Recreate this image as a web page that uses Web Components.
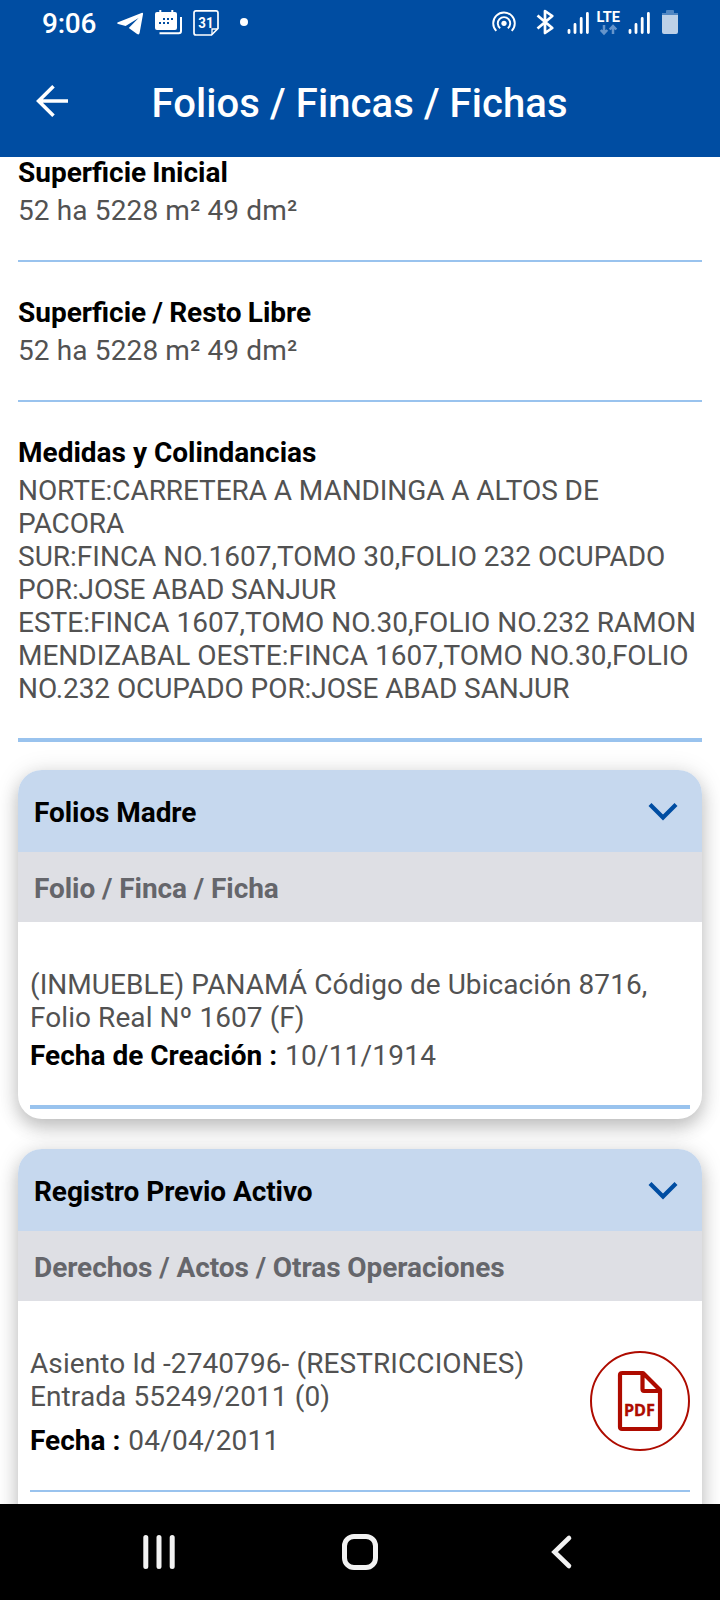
<!DOCTYPE html>
<html lang="es">
<head>
<meta charset="utf-8">
<title>Folios / Fincas / Fichas</title>
<style>
html,body{margin:0;height:100%;overflow:hidden}
body{background:#fff;font-family:Roboto,"Liberation Sans",sans-serif}
</style>
</head>
<body>
<phone-screen>
  <status-bar slot="top"></status-bar>
  <title-bar slot="top">Folios / Fincas / Fichas</title-bar>
  <data-field label="Superficie Inicial" style="--label-words:-1px"><text-line track=".13">52 ha 5228 m² 49 dm²</text-line></data-field>
  <data-field label="Superficie / Resto Libre" style="--label-words:-.7px"><text-line track=".13">52 ha 5228 m² 49 dm²</text-line></data-field>
  <data-field label="Medidas y Colindancias" class="last"><text-line track="-.08">NORTE:CARRETERA A MANDINGA A ALTOS DE</text-line><text-line track="-.15">PACORA</text-line><text-line>SUR:FINCA NO.1607,TOMO 30,FOLIO 232 OCUPADO</text-line><text-line track="-.1">POR:JOSE ABAD SANJUR</text-line><text-line track=".01">ESTE:FINCA 1607,TOMO NO.30,FOLIO NO.232 RAMON</text-line><text-line>MENDIZABAL OESTE:FINCA 1607,TOMO NO.30,FOLIO</text-line><text-line track="-.07">NO.232 OCUPADO POR:JOSE ABAD SANJUR</text-line></data-field>
  <folio-card heading="Folios Madre" sub="Folio / Finca / Ficha">
    <folio-entry label="Fecha de Creación :" date="10/11/1914" class="last"><text-line track=".05">(INMUEBLE) PANAMÁ Código de Ubicación 8716,</text-line><text-line track=".07">Folio Real Nº 1607 (F)</text-line></folio-entry>
  </folio-card>
  <folio-card heading="Registro Previo Activo" sub="Derechos / Actos / Otras Operaciones" class="more">
    <folio-entry label="Fecha :" date="04/04/2011" class="doc"><text-line track=".09">Asiento Id -2740796- (RESTRICCIONES)</text-line><text-line track=".1">Entrada 55249/2011 (0)</text-line><pdf-button slot="action"></pdf-button></folio-entry>
  </folio-card>
  <nav-bar slot="bottom"></nav-bar>
</phone-screen>
<script>
const define = (name, html, setup) => customElements.define(name, class extends HTMLElement {
  constructor() {
    super();
    this.attachShadow({ mode: 'open' }).innerHTML = html;
  }
  connectedCallback() {
    if (setup) setup(this, this.shadowRoot);
  }
});

define('phone-screen', `
<style>
:host{display:flex;flex-direction:column;width:720px;height:1600px;overflow:hidden;background:#fff}
header{flex:none;height:157px;background:#004da2;color:#fff;position:relative;z-index:1}
main{flex:1;min-height:0;overflow:hidden;display:flex;flex-direction:column}
.scroll{padding:0 18px;margin-top:-1px}
</style>
<header><slot name="top"></slot></header>
<main><div class="scroll"><slot></slot></div></main>
<slot name="bottom"></slot>`);

define('text-line', `
<style>:host{display:block;white-space:nowrap}</style><slot></slot>`, el => {
  if (el.hasAttribute('track')) el.style.letterSpacing = el.getAttribute('track') + 'px';
});

define('status-bar', `
<style>
:host{display:flex;height:46px;justify-content:space-between;padding:0 42px;box-sizing:border-box}
div{display:flex;align-items:flex-start}
.time{font-size:28px;font-weight:500;line-height:33px;padding-top:7px;width:75px;white-space:nowrap;letter-spacing:-.25px}
svg{display:block;height:46px;flex:none}
.left{gap:11px}
text{font-family:Roboto,sans-serif;font-weight:700;fill:#fff}
</style>
<div class="left">
  <div class="time" style="margin-right:-11px">9:06</div>
  <svg width="27" viewBox="117 0 27 46"><path fill="#fff" d="M118 22.2 141.5 12.9Q143.4 12.4 143 14.3L139.6 33Q139 35.3 137.1 34L128.8 28 138.6 18 125.6 26 118.2 24Q116 23.1 118 22.2Z"/></svg>
  <svg width="27" viewBox="155 0 27 46"><path fill="#fff" d="M157 12h2.3v-2h2v2h10v-2h2v2h1.700q2 0 2 2v14q0 2-2 2h-18q-2 0-2-2V14q0-2 2-2Z"/><path d="M181 17v14q0 2.300-2.300 2.300H159.500" fill="none" stroke="#fff" stroke-width="2"/><path fill="#004da2" d="M163 18h2v2h-2zM167 18h2v2h-2zM171 18h2v2h-2zM159 22h2v2h-2zM163 22h2v2h-2zM167 22h2v2h-2z"/></svg>
  <svg width="27" viewBox="193 0 27 46"><path fill="none" stroke="#fff" stroke-width="1.700" d="M196 10.900H216Q218 10.900 218 13V28.500L211.500 35H196Q194 35 194 33V13Q194 10.900 196 10.900Z"/><path d="M212 34.500V29H217.500" fill="none" stroke="#fff" stroke-width="1.300"/><text x="198.300" y="28" font-size="15.500" textLength="15.200" lengthAdjust="spacingAndGlyphs">31</text></svg>
  <svg width="10" viewBox="239 0 10 46" style="margin-left:8px"><circle cx="244" cy="22" r="4" fill="#fff"/></svg>
</div>
<div>
  <svg width="187" viewBox="491 0 187 46" fill="none" stroke="#fff">
    <circle cx="504" cy="23.300" r="2.600" fill="#fff" stroke="none"/>
    <path stroke-width="1.900" d="M500.200 28.200A6.200 6.200 0 1 1 507.800 28.200M496.300 30.900A10.800 10.800 0 1 1 511.700 30.900"/>
    <path stroke-width="2.700" stroke-linejoin="round" d="M537.500 15.500 552.300 28 545 33V11L552.300 16 537.500 28.500"/>
    <g stroke-width="2.800" stroke-linecap="round"><path d="M569 30.400V32.600M575 24.400V32.600M581.200 18.400V32.600M587.400 13.400V32.600"/><path d="M630 30.400V32.600M636 24.400V32.600M642.200 18.400V32.600M648.400 13.400V32.600"/></g>
    <text x="596.500" y="21.700" font-size="15" textLength="23.500" lengthAdjust="spacingAndGlyphs" stroke="none">LTE</text>
    <path stroke="#6695cb" stroke-width="2.500" d="M604 25V33M600.700 30 604 33.400 607.300 30M613 34V26M609.700 29.500 613 26 616.300 29.500"/>
    <path fill="#4f86c3" stroke="none" d="M666 13V11Q666 10 667 10h6q1 0 1 1v2h4v2h-16v-2z"/><path fill="#bcd0e8" stroke="none" d="M662 15h16v17q0 2-2 2h-12q-2 0-2-2z"/>
  </svg>
</div>`);

define('title-bar', `
<style>
:host{display:flex;height:111px;align-items:center;box-sizing:border-box;padding-left:35px}
svg{display:block;flex:none;margin-right:82.500px}
h1{margin:0;padding-top:4px;font-size:40px;font-weight:500;line-height:48px;white-space:nowrap;letter-spacing:.09px}
</style>
<svg width="34" height="34" viewBox="0 0 34 34" fill="none" stroke="#fff" stroke-width="3.600"><path d="M18.500 1.300 3.600 16 18.500 30.700M4 16H33"/></svg>
<h1><slot></slot></h1>`);

define('data-field', `
<style>
:host{display:block;font-size:28px;line-height:33px;color:#525252;border-bottom:2px solid #99c3ee;padding-bottom:33px;margin-bottom:34px;white-space:nowrap}
:host(.last){border-bottom-width:4px;margin-bottom:28px}
strong{display:block;color:#000;font-weight:700;margin-bottom:5px;word-spacing:var(--label-words,0)}
</style>
<strong></strong><div><slot></slot></div>`, (el, root) => {
  root.querySelector('strong').textContent = el.getAttribute('label');
});

define('folio-card', `
<style>
:host{display:block;border-radius:24px;background:#fff;margin-bottom:30px;box-shadow:0 9px 18px rgba(0,0,0,.19),0 2px 24px rgba(0,0,0,.13);font-size:28px;line-height:33px}
.head{height:82px;box-sizing:border-box;display:flex;align-items:center;justify-content:space-between;padding:2px 24px 0 16px;background:#c6d8ee;border-radius:24px 24px 0 0;font-weight:700;color:#000;letter-spacing:-.08px}
.sub{height:70px;box-sizing:border-box;display:flex;align-items:center;padding:2px 16px 0;background:#dedfe4;color:#65666b;font-weight:700;letter-spacing:-.07px}
.body{padding:46px 12px 10px}
:host(.more) .body{padding-bottom:80px}
svg{display:block}
</style>
<div class="head"><span></span><svg width="30" height="20" viewBox="0 0 30 20"><path fill="none" stroke="#004da2" stroke-width="4.200" d="M2 2.500 15 15.500 28 2.500"/></svg></div>
<div class="sub"></div>
<div class="body"><slot></slot></div>`, (el, root) => {
  root.querySelector('span').textContent = el.getAttribute('heading');
  root.querySelector('.sub').textContent = el.getAttribute('sub');
});

define('folio-entry', `
<style>
:host{display:flex;justify-content:space-between;color:#525252;border-bottom:2px solid #99c3ee;padding-bottom:33px;white-space:nowrap}
:host(.last){border-bottom-width:4px}
.date{margin-top:5px}
:host(.doc) .date{margin-top:11px}
b{color:#000;font-weight:700}
span{letter-spacing:.22px;margin-left:1px}
::slotted(pdf-button){margin-top:4px}
</style>
<div><div><slot></slot></div><div class="date"><b></b> <span></span></div></div>
<slot name="action"></slot>`, (el, root) => {
  root.querySelector('b').textContent = el.getAttribute('label');
  root.querySelector('span').textContent = el.getAttribute('date');
});

define('pdf-button', `
<style>
:host{display:flex;width:100px;height:100px;box-sizing:border-box;border:2px solid #ae0b00;border-radius:50%;flex:none;align-items:center;justify-content:center}
svg{display:block}
text{font-family:"Noto Sans",sans-serif;font-weight:700;fill:#ae0b00}
</style>
<svg width="46" height="62" viewBox="0 0 46 62" fill="none" stroke="#ae0b00" stroke-width="4.200" stroke-linejoin="round"><path d="M4.500 3H26L43 20V57Q43 59 41 59H5Q3 59 3 57V5Q3 3 5 3M25.500 3V19Q25.500 21 27 21H43"/><text x="7" y="46" font-size="15.500" textLength="31" lengthAdjust="spacingAndGlyphs" stroke="#ae0b00" stroke-width=".3">PDF</text></svg>`);

define('nav-bar', `
<style>
:host{display:flex;flex:none;height:96px;background:#000;align-items:center;justify-content:space-between;padding:0 147px 0 142px;box-sizing:border-box}
svg{display:block}
.home{margin-right:7px}
</style>
<svg width="34" height="40" viewBox="142 1532 34 40" stroke="#f2f2f2" stroke-width="5" stroke-linecap="round"><path d="M145.800 1537.500V1566.500M159 1537.500V1566.500M172.200 1537.500V1566.500"/></svg>
<svg class="home" width="38" height="40" viewBox="341 1532 38 40"><rect x="344.500" y="1536.500" width="31" height="31" rx="9.500" fill="none" stroke="#f2f2f2" stroke-width="5"/></svg>
<svg width="22" height="40" viewBox="551 1532 22 40" fill="none" stroke="#f2f2f2" stroke-width="4.600" stroke-linecap="round"><path d="M569 1538 554.500 1552 569 1566"/></svg>`);
</script>
</body>
</html>
